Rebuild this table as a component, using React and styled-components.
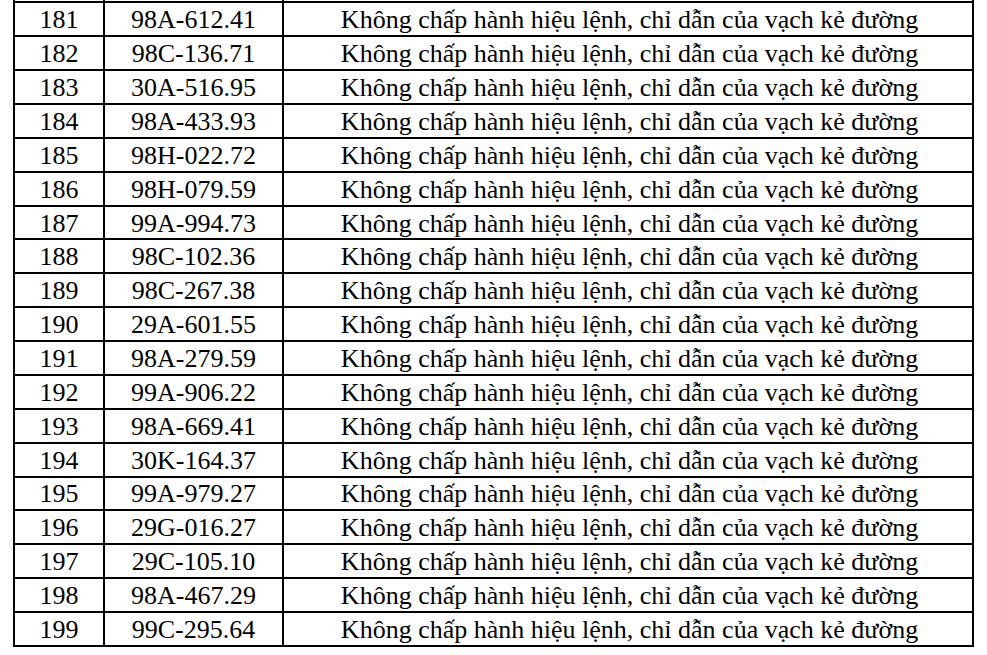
import styled, { createGlobalStyle } from "styled-components";

const GlobalStyle = createGlobalStyle`
  html, body {
    margin: 0;
    padding: 0;
    background: #ffffff;
    overflow: hidden;
  }
`;

const reason = "Không chấp hành hiệu lệnh, chỉ dẫn của vạch kẻ đường";

const rows = [
  ["180", "98A-000.00"],
  ["181", "98A-612.41"],
  ["182", "98C-136.71"],
  ["183", "30A-516.95"],
  ["184", "98A-433.93"],
  ["185", "98H-022.72"],
  ["186", "98H-079.59"],
  ["187", "99A-994.73"],
  ["188", "98C-102.36"],
  ["189", "98C-267.38"],
  ["190", "29A-601.55"],
  ["191", "98A-279.59"],
  ["192", "99A-906.22"],
  ["193", "98A-669.41"],
  ["194", "30K-164.37"],
  ["195", "99A-979.27"],
  ["196", "29G-016.27"],
  ["197", "29C-105.10"],
  ["198", "98A-467.29"],
  ["199", "99C-295.64"],
];

export default function App() {
  return (
    <>
      <GlobalStyle />
      <Page>
        <Table>
          <colgroup>
            <Col $w={90} />
            <Col $w={179} />
            <Col $w={690} />
          </colgroup>
          <tbody>
            {rows.map(([no, plate]) => (
              <Row key={no}>
                <Cell>{no}</Cell>
                <Cell>{plate}</Cell>
                <Cell $shift={3}>{reason}</Cell>
              </Row>
            ))}
          </tbody>
        </Table>
      </Page>
    </>
  );
}

const Page = styled.div`
  width: 987px;
  height: 655px;
  overflow: hidden;
  padding-left: 13px;
  box-sizing: border-box;
`;

const Table = styled.table`
  border-collapse: collapse;
  table-layout: fixed;
  width: 961px;
  margin-top: -32.4px;
  font-family: "Liberation Serif", "Times New Roman", serif;
  font-size: 26px;
  color: #000;
`;

const Col = styled.col`
  width: ${(p) => p.$w}px;
`;

const Row = styled.tr`
  height: 33.87px;
`;

const Cell = styled.td`
  border: 2px solid #000;
  padding: 2px 0 0 ${(p) => p.$shift || 0}px;
  text-align: center;
  vertical-align: middle;
  line-height: 1;
  white-space: nowrap;
`;
